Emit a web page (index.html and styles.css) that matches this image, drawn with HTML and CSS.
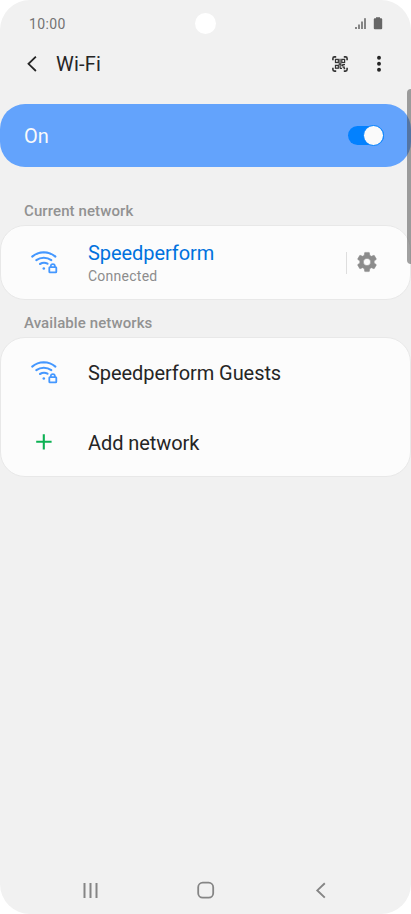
FILE: index.html
```
<!DOCTYPE html>
<html lang="en">
<head>
<meta charset="utf-8">
<title>Wi-Fi</title>
<link rel="stylesheet" href="styles.css">
</head>
<body>
<svg class="defs" aria-hidden="true">
  <symbol id="wifi" viewBox="0 0 40 40">
    <g fill="none" stroke="#4598ff" stroke-width="2.100" stroke-linecap="round">
      <path d="M8.2 16.600Q13.200 12.300 19.800 12.200Q26.400 12.300 31.400 16.600"/>
      <path d="M12.300 20.200Q15.600 17.700 19.800 17.700Q24 17.700 27.300 20.200"/>
      <path d="M16 24Q19.800 21.600 23.500 23.700"/>
      <rect x="25.300" y="27.200" width="7" height="5.200" rx=".6" stroke-width="1.800"/>
      <path d="M26.800 27V26.100a2.050 2.050 0 0 1 4.100 0V27" stroke-width="1.700"/>
    </g>
    <circle cx="19.800" cy="28.500" r="1.300" fill="#4598ff"/>
  </symbol>
</svg>
<div class="phone">
  <div class="status">
    <span class="time">10:00</span>
    <span class="camera"></span>
    <svg class="status-icons" width="30" height="14" viewBox="0 0 30 14">
      <g fill="#858585">
        <rect x="0" y="10" width="2" height="2"/>
        <rect x="3" y="7.500" width="2" height="4.500"/>
        <rect x="6" y="4.500" width="2" height="7.500"/>
        <rect x="9" y="1.200" width="2" height="10.800"/>
      </g>
      <path d="M21 .2h4v1.100h1.200q1 0 1 1v8.900q0 1-1 1h-6.400q-1 0-1-1V2.300q0-1 1-1H21z" fill="#666"/>
    </svg>
  </div>
  <header class="bar">
    <svg class="back" width="12" height="18" viewBox="0 0 12 18"><path d="M9.900 1.600L2.500 8.800l7.400 7.200" fill="none" stroke="#252525" stroke-width="1.800"/></svg>
    <h1>Wi-Fi</h1>
    <svg class="qr" width="16" height="16" viewBox="0 0 16 16" fill="none" stroke="#333">
      <path d="M.9 4.200V2.500Q.9.900 2.500.9H4.200M11.800.9h1.700q1.600 0 1.600 1.600V4.200M.9 11.800v1.700q0 1.600 1.600 1.600H4.200M11.800 15.100h1.700q1.600 0 1.600-1.600V11.800" stroke-width="1.600"/>
      <g stroke-width="1.250">
        <rect x="3.500" y="3.400" width="2.800" height="3.100"/>
        <rect x="9.800" y="3.400" width="2.800" height="3.100"/>
        <rect x="3.500" y="9.400" width="2.800" height="2.800"/>
        <path d="M8 2.800v4.700M6.500 8.200h3.200M8.100 8v4.500M9.300 9.700h1.500V8.500h2.200M8 12.400h2M10.500 11h1.700v1.500h1"/>
      </g>
    </svg>
    <svg class="more" width="4" height="18" viewBox="0 0 4 18" fill="#252525"><circle cx="2" cy="2.800" r="1.950"/><circle cx="2" cy="8.800" r="1.950"/><circle cx="2" cy="14.800" r="1.950"/></svg>
  </header>
  <main>
    <section class="master">
      <span>On</span>
      <span class="switch"><span class="knob"></span></span>
    </section>
    <h2 class="current">Current network</h2>
    <section class="card">
      <div class="row connected">
        <svg class="wifi"><use href="#wifi"/></svg>
        <div class="label">
          <div class="name active">Speedperform</div>
          <div class="sub">Connected</div>
        </div>
        <span class="divider"></span>
        <svg class="gear" width="24" height="24" viewBox="0 0 24 24"><path fill="#8c8c8c" stroke="#8c8c8c" stroke-width=".5" stroke-linejoin="round" d="M19.140 12.940c.040-.3.060-.610.060-.940 0-.320-.020-.640-.070-.940l2.030-1.580c.180-.140.230-.410.120-.610l-1.920-3.320c-.120-.220-.370-.290-.590-.220l-2.390.960c-.5-.380-1.030-.7-1.620-.940l-.360-2.540c-.040-.240-.240-.410-.480-.410h-3.840c-.240 0-.430.170-.470.410l-.360 2.540c-.590.240-1.130.570-1.620.940l-2.390-.960c-.220-.080-.470 0-.590.220L2.740 8.870c-.120.210-.080.470.120.610l2.030 1.580c-.050.3-.090.630-.090.940s.020.640.070.940l-2.030 1.580c-.180.140-.230.410-.120.610l1.920 3.320c.120.220.370.290.590.220l2.390-.960c.5.380 1.030.7 1.620.940l.360 2.540c.050.240.240.410.480.410h3.840c.240 0 .440-.170.470-.410l.360-2.540c.590-.240 1.130-.560 1.620-.940l2.390.960c.220.080.470 0 .590-.220l1.920-3.320c.120-.220.070-.470-.120-.610zM12 15.600A3.600 3.600 0 1 1 12 8.400a3.600 3.600 0 0 1 0 7.200z"/></svg>
      </div>
    </section>
    <h2 class="available">Available networks</h2>
    <section class="card">
      <div class="row">
        <svg class="wifi"><use href="#wifi"/></svg>
        <div class="label name">Speedperform Guests</div>
      </div>
      <div class="row">
        <svg class="plus" viewBox="0 0 40 40"><path d="M12.200 19.700h15.400M19.800 12.200v15.400" stroke="#0cb153" stroke-width="2.100"/></svg>
        <div class="label name add">Add network</div>
      </div>
    </section>
  </main>
  <nav>
    <svg width="18" height="18" viewBox="0 0 18 18" stroke="#858585" stroke-width="2"><path d="M3.500 2v15M9.500 2v15M15.500 2v15"/></svg>
    <svg width="18" height="18" viewBox="0 0 18 18" fill="none" stroke="#858585" stroke-width="1.800"><rect x="1.200" y="1.700" width="15" height="15" rx="4.500"/></svg>
    <svg width="18" height="18" viewBox="0 0 18 18" fill="none" stroke="#858585" stroke-width="1.900"><path d="M12.800 2.200L5.300 9.400l7.500 7.200"/></svg>
  </nav>
  <span class="scrollbar"></span>
</div>
</body>
</html>
```
FILE: styles.css
```
* { box-sizing: border-box; }
body { margin: 0; background: #fff; font-family: Roboto, sans-serif; color: #252525; }
svg { display: block; flex: none; }
.defs { position: absolute; width: 0; height: 0; }
.phone {
  position: relative;
  display: flex;
  flex-direction: column;
  width: 411px;
  height: 914px;
  overflow: hidden;
  border-radius: 30px;
  background: #f1f1f1;
}
.status {
  display: grid;
  grid-template-columns: 166px 21px 1fr;
  align-items: center;
  height: 47px;
  padding: 0 26px 0 29px;
}
.time { font-size: 14px; letter-spacing: .4px; color: #737373; }
.camera { width: 21px; height: 21px; border-radius: 50%; background: #fff; }
.status-icons { justify-self: end; }
.bar { display: flex; align-items: center; height: 34px; padding: 0 30px 0 26px; }
h1 { flex: 1; margin: 0 0 0 18px; font-size: 20px; font-weight: 400; line-height: 34px; letter-spacing: .2px; }
.qr { margin-right: 29px; }
main { flex: 1; padding-top: 23px; }
.master {
  display: flex;
  align-items: center;
  justify-content: space-between;
  height: 63px;
  padding: 0 27px 0 24px;
  border-radius: 25px;
  background: #63a3fc;
  color: #fafafa;
  font-size: 20px;
}
.switch { display: flex; align-items: center; justify-content: flex-end; width: 36px; height: 19px; border-radius: 10px; background: #0381fe; }
.knob { flex: none; width: 21px; height: 21px; border: 1px solid #0381fe; border-radius: 50%; background: #fafafa; }
h2 { margin: 0; padding-left: 24px; font-size: 15px; font-weight: 500; line-height: 24px; letter-spacing: .1px; color: #929292; }
.current { padding-top: 32px; height: 58px; }
.available { padding-top: 11px; height: 37px; }
.card { border: 1px solid #e8e8e8; border-radius: 25px; background: #fcfcfc; }
.row { display: flex; align-items: center; height: 69px; padding: 0 31px 0 23px; }
.connected { height: 73px; }
.wifi, .plus { width: 40px; height: 40px; }
.wifi { margin-bottom: 6px; }
.gear { margin-bottom: 1px; }
.label { flex: 1; margin-left: 24px; }
.connected .label { padding-top: 3px; }
.name { font-size: 20px; line-height: 24px; letter-spacing: -.07px; }
.add { padding-top: 2px; }
.active { color: #0072de; }
.sub { font-size: 14px; line-height: 22px; letter-spacing: .25px; color: #8c8c8c; }
.divider { width: 1px; height: 22px; margin-right: 8px; background: #dedede; }
nav { display: flex; justify-content: space-between; height: 33px; padding: 0 81px; }
.scrollbar {
  position: absolute;
  top: 89px;
  right: 0;
  width: 4px;
  height: 175px;
  border-radius: 4px 0 0 4px;
  background: rgba(70, 70, 70, .5);
}
```
